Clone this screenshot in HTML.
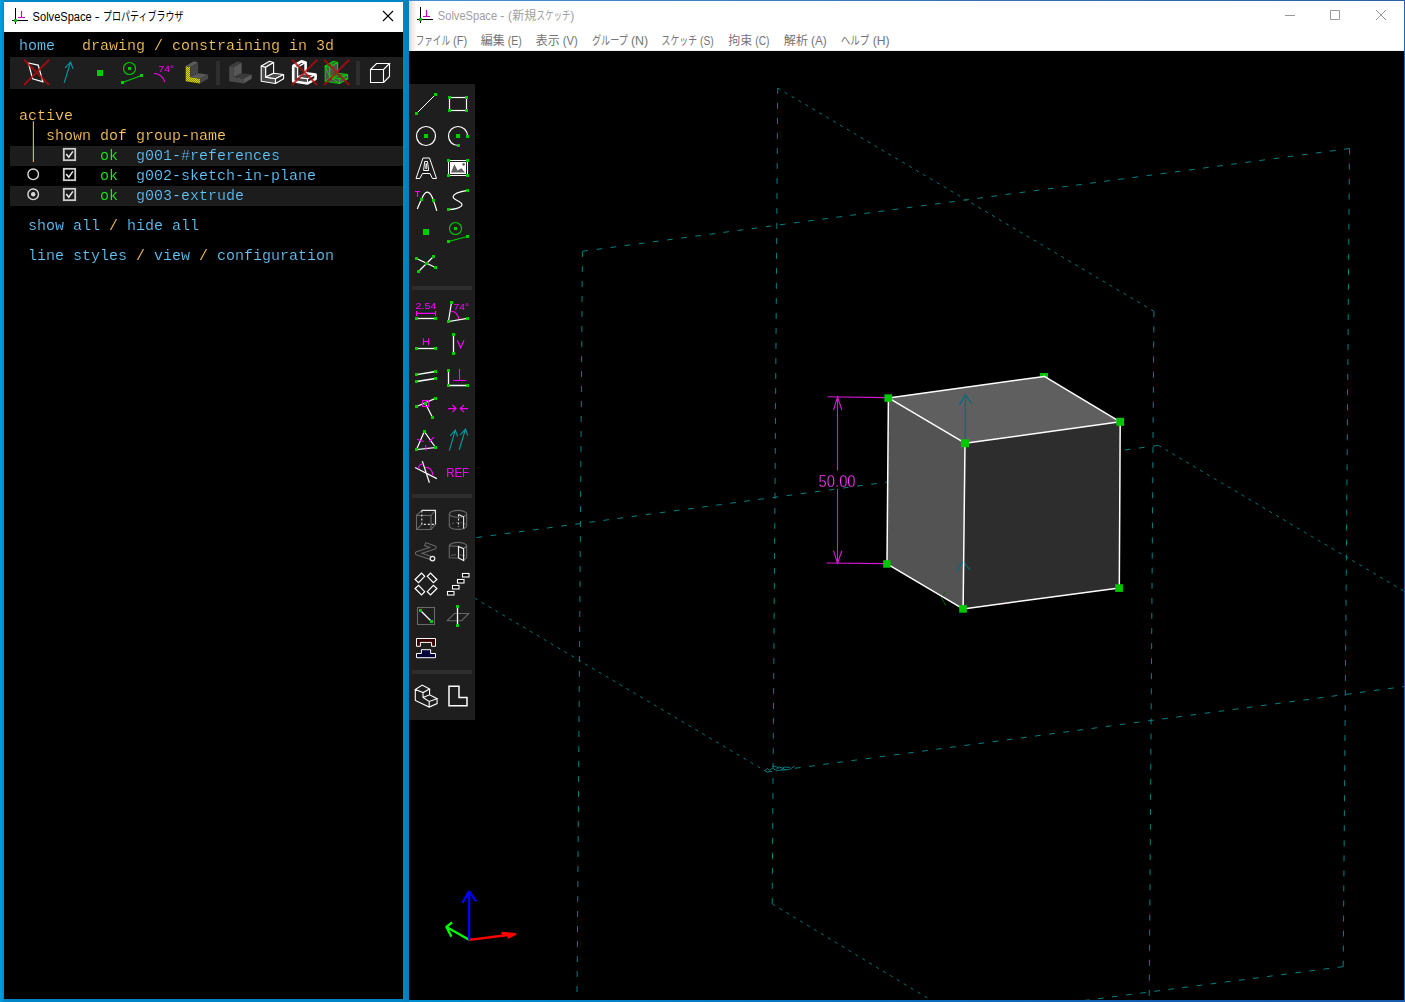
<!DOCTYPE html>
<html lang="ja">
<head>
<meta charset="utf-8">
<title>SolveSpace</title>
<style>
html,body{margin:0;padding:0;}
body{width:1405px;height:1002px;overflow:hidden;position:relative;background:#000;
  font-family:"Liberation Sans","Noto Sans CJK JP",sans-serif;}
.abs{position:absolute;}
/* ---------- left window (property browser) ---------- */
#lw{position:absolute;left:0;top:0;width:409px;height:1002px;
  background:linear-gradient(90deg,#00a0e2 0px,#0092d4 3px,#0086c8 4px,#0086c8 403px,#0484c2 404px,#027ebc 409px);}
#lw .title{position:absolute;left:4px;top:2px;width:399px;height:30px;background:#fff;}
#lw .title span{position:absolute;left:29px;top:7px;font-size:12px;line-height:15px;color:#000;white-space:nowrap;}
#lw .body{position:absolute;left:4px;top:32px;width:399px;height:967px;background:#000;}
.mono{font-family:"Liberation Mono","DejaVu Sans Mono",monospace;font-size:15px;line-height:20px;
  white-space:pre;position:absolute;letter-spacing:0;opacity:0.999;-webkit-text-stroke:0.18px #000;paint-order:fill stroke;}
.o{color:#ffc864;}
.l{color:#64c8ff;}
.g{color:#28f028;}
.rowbg{position:absolute;left:10px;width:393px;height:20px;background:#1c1c1c;}
/* ---------- right window (main) ---------- */
#rw{position:absolute;left:409px;top:0;width:996px;height:1002px;background:#000;}
#rw .title{position:absolute;left:0;top:1px;width:995px;height:30px;background:#fff;}
#rw .title span{position:absolute;left:29px;top:7px;font-size:12px;line-height:15px;color:#999;white-space:nowrap;}
#rw .menu{position:absolute;left:0;top:31px;width:995px;height:20px;background:#fff;border-bottom:1px solid #f0f0f0;box-sizing:border-box;}
#rw .menu span{position:absolute;top:6px;font-size:12px;line-height:15px;color:#6d6d6d;white-space:nowrap;}
#gfx{position:absolute;left:0;top:0;width:1405px;height:1002px;}
#rw .shade{position:absolute;left:0;top:1px;width:8px;height:50px;background:linear-gradient(90deg,#d4d4d4,#ececec 40%,#fff);}
#rw .bt{position:absolute;left:0;top:0;width:996px;height:1px;background:linear-gradient(90deg,#4590d4,#3570b6 60%,#2b5ea6);}
#rw .bb{position:absolute;left:0;top:1000px;width:996px;height:2px;background:linear-gradient(90deg,#0090d0,#0a78c4 35%,#1560b4 75%,#1a5cae);}
#rw .br{position:absolute;left:995px;top:0;width:1px;height:1002px;background:#2a62a4;}
</style>
</head>
<body>

<!-- ================= LEFT WINDOW ================= -->
<div id="lw">
  <div class="title"></div>
  <div class="body"></div>
</div>

<!-- text-window content (absolute page coords) -->
<div class="abs" style="left:10px;top:57px;width:393px;height:32px;background:#1e1e1e;"></div>
<div class="rowbg" style="top:146px;"></div>
<div class="rowbg" style="top:186px;"></div>

<div class="mono" style="left:19px;top:37px;"><span class="l">home</span><span class="o">   drawing / constraining in 3d</span></div>
<div class="mono o" style="left:19px;top:107px;">active</div>
<div class="mono o" style="left:46px;top:127px;">shown dof group-name</div>
<div class="mono" style="left:100px;top:147px;"><span class="g">ok</span>  <span class="l">g001-#references</span></div>
<div class="mono" style="left:100px;top:167px;"><span class="g">ok</span>  <span class="l">g002-sketch-in-plane</span></div>
<div class="mono" style="left:100px;top:187px;"><span class="g">ok</span>  <span class="l">g003-extrude</span></div>
<div class="mono" style="left:28px;top:217px;"><span class="l">show all</span><span class="o"> / </span><span class="l">hide all</span></div>
<div class="mono" style="left:28px;top:247px;"><span class="l">line styles</span><span class="o"> / </span><span class="l">view</span><span class="o"> / </span><span class="l">configuration</span></div>

<!-- ================= RIGHT WINDOW ================= -->
<div id="rw">
  <div class="title"></div>
  <div class="menu"></div>
  <div class="shade"></div>
  <div class="bt"></div><div class="bb"></div><div class="br"></div>
</div>

<!-- ================= GRAPHICS OVERLAY ================= -->
<svg id="gfx" width="1405" height="1002" viewBox="0 0 1405 1002">
<defs><filter id="nf" x="-10%" y="-30%" width="120%" height="160%"><feOffset dx="0" dy="0"/></filter><clipPath id="cv"><rect x="409" y="51" width="995" height="949"/></clipPath></defs>
<g clip-path="url(#cv)">
<line x1="582.4" y1="251.3" x2="1349.5" y2="148.5" stroke="#008186" stroke-width="1" stroke-dasharray="5.69 8.54"/>
<line x1="1349.5" y1="148.5" x2="1343.2" y2="966.6" stroke="#008186" stroke-width="1" stroke-dasharray="6.02 9.02"/>
<line x1="1343.2" y1="966.6" x2="576.5" y2="1067.0" stroke="#008186" stroke-width="1" stroke-dasharray="5.69 8.53"/>
<line x1="576.5" y1="1067.0" x2="582.4" y2="251.3" stroke="#008186" stroke-width="1" stroke-dasharray="6.00 9.00"/>
<line x1="777.7" y1="88.1" x2="1153.9" y2="311.3" stroke="#007479" stroke-width="1" stroke-dasharray="3.22 4.82"/>
<line x1="1153.9" y1="311.3" x2="1148.3" y2="1132.0" stroke="#008186" stroke-width="1" stroke-dasharray="6.03 9.05"/>
<line x1="1148.3" y1="1132.0" x2="772.2" y2="903.9" stroke="#007479" stroke-width="1" stroke-dasharray="3.23 4.85"/>
<line x1="772.2" y1="903.9" x2="777.7" y2="88.1" stroke="#008186" stroke-width="1" stroke-dasharray="6.00 9.00"/>
<line x1="392.0" y1="549.0" x2="1158.5" y2="445.4" stroke="#008186" stroke-width="1" stroke-dasharray="5.69 8.53"/>
<line x1="1158.5" y1="445.4" x2="1535.0" y2="669.0" stroke="#007479" stroke-width="1" stroke-dasharray="3.22 4.83"/>
<line x1="1535.0" y1="669.0" x2="767.0" y2="772.0" stroke="#008186" stroke-width="1" stroke-dasharray="5.70 8.55"/>
<line x1="767.0" y1="772.0" x2="392.0" y2="549.0" stroke="#007479" stroke-width="1" stroke-dasharray="3.21 4.81"/>
<path d="M764.5,770.5 l3,-2 l2,2 l3,-2.5 l3,2 l3,-3 l4,1 l3,2 l5,-1 l4,-3 M776,771 l5,-1 l3,-3 l6,0.5 M772,766 l4,0.5 l3,2" stroke="#008186" stroke-width="0.9" fill="none"/>
<rect x="1040.1" y="373" width="8.0" height="7.0" fill="#00c800"/>
<polygon points="888.4,397.9 1044.4,376.4 1120.2,421.8 965.0,443.2" fill="#5f5f5f" stroke="none" stroke-width="1" />
<polygon points="888.4,397.9 965.0,443.2 963.1,608.9 887.0,563.8" fill="#535353" stroke="none" stroke-width="1" />
<polygon points="965.0,443.2 1120.2,421.8 1119.3,588.1 963.1,608.9" fill="#2d2d2d" stroke="none" stroke-width="1" />
<path d="M965.2,443 L965.4,394.7 M959.2,405.4 L965.4,394.7 L971.6,403.6" stroke="#007078" stroke-width="1.2" fill="none"/>
<path d="M956.5,571.8 L962.9,561.1 L969.9,570" stroke="#006c80" stroke-width="1.2" fill="none"/>
<path d="M945.8,591.7 L941.4,597.6 L945.8,605.6" stroke="#006400" stroke-width="1" fill="none"/>
<path d="M1001.5,605 L1005,603.5" stroke="#700000" stroke-width="1" fill="none"/>
<line x1="888.4" y1="397.9" x2="1044.4" y2="376.4" stroke="#ffffff" stroke-width="1.5" stroke-linecap="round"/>
<line x1="1044.4" y1="376.4" x2="1120.2" y2="421.8" stroke="#ffffff" stroke-width="1.5" stroke-linecap="round"/>
<line x1="1120.2" y1="421.8" x2="965.0" y2="443.2" stroke="#ffffff" stroke-width="1.5" stroke-linecap="round"/>
<line x1="965.0" y1="443.2" x2="888.4" y2="397.9" stroke="#ffffff" stroke-width="1.5" stroke-linecap="round"/>
<line x1="888.4" y1="397.9" x2="887.0" y2="563.8" stroke="#ffffff" stroke-width="1.5" stroke-linecap="round"/>
<line x1="965.0" y1="443.2" x2="963.1" y2="608.9" stroke="#ffffff" stroke-width="1.5" stroke-linecap="round"/>
<line x1="1120.2" y1="421.8" x2="1119.3" y2="588.1" stroke="#ffffff" stroke-width="1.5" stroke-linecap="round"/>
<line x1="887.0" y1="563.8" x2="963.1" y2="608.9" stroke="#ffffff" stroke-width="1.5" stroke-linecap="round"/>
<line x1="963.1" y1="608.9" x2="1119.3" y2="588.1" stroke="#ffffff" stroke-width="1.5" stroke-linecap="round"/>
<path d="M827.5,396.8 L886,397.6 M826.5,563 L885,563.6 M837.5,397 L837.5,470.5 M837.5,489 L837.5,563.2 M833.5,410 L837.5,397 L841.9,410 M833.5,550.7 L837.5,563.2 L841.9,550.7" stroke="#d418d4" stroke-width="1.1" fill="none"/>
<text filter="url(#nf)" x="818.6" y="486.8" font-family="'Liberation Sans',sans-serif" font-size="16.4" fill="#ff3cff" textLength="37" lengthAdjust="spacingAndGlyphs" stroke="#000" stroke-width="0.3">50.00</text>
<rect x="884.4" y="394.3" width="7.7" height="7.5" fill="#00c800"/>
<rect x="1116.3" y="417.8" width="7.8" height="8.0" fill="#00c800"/>
<rect x="961" y="439.2" width="8.0" height="8.0" fill="#00c800"/>
<rect x="883.2" y="560.2" width="7.4" height="7.5" fill="#00c800"/>
<rect x="959.2" y="605.1" width="7.6" height="7.6" fill="#00c800"/>
<rect x="1115.2" y="584.3" width="7.7" height="7.6" fill="#00c800"/>
<g fill="none" stroke-width="2.3" stroke-linecap="butt" stroke-linejoin="round">
<path d="M469.1,939.8 L446.4,927 M452.1,922.3 L446.4,927 L451.4,936.6" stroke="#00ff00"/>
<path d="M469.1,939.8 L515.1,934.1 M501.5,933 L515.1,934.1 L507.6,937.7" stroke="#ff0000"/>
<path d="M469.1,939.8 L469.1,891.4 M462.4,902.8 L469.1,891.4 L476.1,901.4" stroke="#0000ff"/>
</g>
</g>
<rect x="409" y="84" width="66" height="636" fill="#1e1e1e"/>
<rect x="412" y="286" width="60" height="4" fill="#2e2e2e"/>
<rect x="412" y="494" width="60" height="4" fill="#2e2e2e"/>
<rect x="412" y="670" width="60" height="4" fill="#2e2e2e"/>
<g shape-rendering="auto">
<line x1="416.5" y1="113.5" x2="435.5" y2="94.5" stroke="#fff" stroke-width="1" />
<rect x="415" y="112" width="3" height="3" fill="#00cc00"/>
<rect x="434" y="93" width="3" height="3" fill="#00cc00"/>
<rect x="449.5" y="97.5" width="17" height="13" fill="none" stroke="#fff" stroke-width="1.2"/>
<rect x="448" y="96" width="3" height="3" fill="#00cc00"/>
<rect x="465" y="96" width="3" height="3" fill="#00cc00"/>
<rect x="448" y="109" width="3" height="3" fill="#00cc00"/>
<rect x="465" y="109" width="3" height="3" fill="#00cc00"/>
<circle cx="426" cy="136" r="9.5" fill="none" stroke="#fff" stroke-width="1.2"/>
<rect x="424" y="134" width="4" height="4" fill="#00cc00"/>
<path d="M467.5,136 A9.5,9.5 0 1 0 458,145.5" stroke="#fff" stroke-width="1.2" fill="none" />
<rect x="456" y="134" width="4" height="4" fill="#00cc00"/>
<rect x="466" y="135" width="3" height="3" fill="#00cc00"/>
<rect x="457" y="144" width="3" height="3" fill="#00cc00"/>
<path d="M416,178.5 L423,158 L429.5,158 L436.5,178.5 L432.5,178.5 L430,173.5 L422.5,173.5 L419.8,178.5 Z M423.6,170.5 L424.7,161.5 L427.5,161.5 L428.6,170.5 Z" stroke="#fff" stroke-width="1" fill="none" />
<path d="M426,163.5 L425.6,168.5 L426.8,168.5 L426.4,163.5 Z" stroke="#fff" stroke-width="0.8" fill="none" />
<rect x="448.5" y="160.5" width="19" height="15" fill="none" stroke="#fff" stroke-width="1"/>
<rect x="450" y="162" width="16" height="12" fill="#fff"/>
<polygon points="451.0,172.6 454.4,164.2 457.6,170.5 461.4,168.2 465.0,172.6" fill="#606060" stroke="none" stroke-width="1" />
<circle cx="463.6" cy="164.4" r="1.3" fill="#606060"/>
<rect x="447" y="159" width="3" height="3" fill="#00cc00"/>
<rect x="466" y="159" width="3" height="3" fill="#00cc00"/>
<rect x="447" y="174" width="3" height="3" fill="#00cc00"/>
<rect x="466" y="174" width="3" height="3" fill="#00cc00"/>
<path d="M417.3,208.9 C419,205 420,202 421.5,199.6 C424,193 426,192 427.5,192.2 C430,192.5 432,196 433.3,200.6 C434.8,204 436,208 436.8,210.8" stroke="#fff" stroke-width="1.2" fill="none" />
<rect x="420" y="198" width="3" height="3" fill="#00cc00"/>
<rect x="432" y="199" width="3" height="3" fill="#00cc00"/>
<path d="M415,191.5 L420,191.5 M417.5,191.5 L417.5,197" stroke="#ff00ff" stroke-width="1.2" fill="none" />
<path d="M467.5,190.3 C460,191.5 453.5,194 453.1,196.7 C453,200 462.5,201.5 462,204.7 C461.5,208 454,209.5 448.3,209.5" stroke="#fff" stroke-width="1.2" fill="none" />
<rect x="466" y="189" width="3" height="3" fill="#00cc00"/>
<rect x="447" y="208" width="3" height="3" fill="#00cc00"/>
<rect x="423" y="229" width="6" height="6" fill="#00cc00"/>
<circle cx="455.5" cy="228.5" r="6" fill="none" stroke="#00cc00" stroke-width="1.1"/>
<rect x="454" y="227" width="3" height="3" fill="#00cc00"/>
<line x1="448.5" y1="241.5" x2="467.5" y2="236.5" stroke="#00cc00" stroke-width="1.1" />
<rect x="447" y="240" width="3" height="3" fill="#00cc00"/>
<rect x="466" y="235" width="3" height="3" fill="#00cc00"/>
<line x1="416.5" y1="258.5" x2="435.5" y2="267.5" stroke="#fff" stroke-width="1.2" />
<line x1="433.5" y1="256.5" x2="418.5" y2="271.5" stroke="#fff" stroke-width="1.2" />
<rect x="415" y="257" width="3" height="3" fill="#00cc00"/>
<rect x="432" y="255" width="3" height="3" fill="#00cc00"/>
<rect x="434" y="266" width="3" height="3" fill="#00cc00"/>
<rect x="417" y="270" width="3" height="3" fill="#00cc00"/>
<rect x="425" y="262" width="3" height="3" fill="#00cc00"/>
<text filter="url(#nf)" x="415.6" y="308.9" font-family="'Liberation Sans',sans-serif" font-size="9.6" fill="#ff00ff" textLength="20.8" lengthAdjust="spacingAndGlyphs">2.54</text>
<path d="M416.5,313.4 L435.5,313.4 M416.5,311 L416.5,316 M435.5,311 L435.5,316" stroke="#ff00ff" stroke-width="1.1" fill="none" />
<line x1="416.5" y1="318.5" x2="435.5" y2="318.5" stroke="#fff" stroke-width="1.3" />
<rect x="415" y="317" width="3" height="3" fill="#00cc00"/>
<rect x="434" y="317" width="3" height="3" fill="#00cc00"/>
<path d="M451.5,302.4 L448.4,321.5 L467.5,318.4" stroke="#fff" stroke-width="1.2" fill="none" />
<path d="M451,311.3 C455,311.3 458.3,314.5 458.6,319" stroke="#ff00ff" stroke-width="1.1" fill="none" />
<text filter="url(#nf)" x="453.6" y="309.8" font-family="'Liberation Sans',sans-serif" font-size="9.6" fill="#ff00ff" textLength="15.6" lengthAdjust="spacingAndGlyphs">74°</text>
<rect x="450" y="301" width="3" height="3" fill="#00cc00"/>
<rect x="447" y="320" width="3" height="3" fill="#00cc00"/>
<rect x="466" y="317" width="3" height="3" fill="#00cc00"/>
<path d="M423.4,338.2 L423.4,345 M428.6,338.2 L428.6,345 M423.4,341.5 L428.6,341.5" stroke="#ff00ff" stroke-width="1.1" fill="none" />
<line x1="416.5" y1="348.5" x2="435.5" y2="348.5" stroke="#fff" stroke-width="1.3" />
<rect x="415" y="347" width="3" height="3" fill="#00cc00"/>
<rect x="434" y="347" width="3" height="3" fill="#00cc00"/>
<line x1="453.5" y1="334.5" x2="453.5" y2="353.5" stroke="#fff" stroke-width="1.3" />
<rect x="452" y="333" width="3" height="3" fill="#00cc00"/>
<rect x="452" y="352" width="3" height="3" fill="#00cc00"/>
<path d="M457.2,340.2 L460.6,347.8 L464,340.2" stroke="#ff00ff" stroke-width="1.1" fill="none" />
<line x1="416.5" y1="374.6" x2="435.5" y2="371.5" stroke="#fff" stroke-width="1.3" />
<line x1="416.5" y1="381.5" x2="435.5" y2="378.5" stroke="#fff" stroke-width="1.3" />
<rect x="415" y="373" width="3" height="3" fill="#00cc00"/>
<rect x="434" y="370" width="3" height="3" fill="#00cc00"/>
<rect x="415" y="380" width="3" height="3" fill="#00cc00"/>
<rect x="434" y="377" width="3" height="3" fill="#00cc00"/>
<path d="M448.5,370.5 L448.5,385.5 L467.5,385.5" stroke="#fff" stroke-width="1.3" fill="none" />
<path d="M459.5,369 L459.5,380.5 M453.2,380.5 L466,380.5" stroke="#ff00ff" stroke-width="1.1" fill="none" />
<rect x="447" y="369" width="3" height="3" fill="#00cc00"/>
<rect x="447" y="384" width="3" height="3" fill="#00cc00"/>
<rect x="466" y="384" width="3" height="3" fill="#00cc00"/>
<path d="M416.5,406.5 L435.5,398.4 M425.5,403.6 L432.5,417.5" stroke="#fff" stroke-width="1.2" fill="none" />
<rect x="415" y="405" width="3" height="3" fill="#00cc00"/>
<rect x="434" y="397" width="3" height="3" fill="#00cc00"/>
<rect x="431" y="416" width="3" height="3" fill="#00cc00"/>
<rect x="424" y="402" width="3" height="3" fill="#00cc00"/>
<rect x="422.5" y="400.5" width="6" height="6" fill="none" stroke="#ff00ff" stroke-width="1.1"/>
<path d="M448,408.6 L456,408.6 M452.5,405 L456,408.6 L452.5,412.2 M468,408.6 L460.2,408.6 M464,405 L460.2,408.6 L464,412.2" stroke="#ff00ff" stroke-width="1.1" fill="none" />
<path d="M424.3,431.5 L416.5,449.6 L435.5,447.5 Z" stroke="#fff" stroke-width="1.2" fill="none" />
<path d="M417,439.2 L423.7,441.6 M429.3,441.6 L433.9,437.1 M425.5,445.1 L426.3,450.7" stroke="#ff00ff" stroke-width="1.1" fill="none" />
<rect x="423" y="430" width="3" height="3" fill="#00cc00"/>
<rect x="415" y="448" width="3" height="3" fill="#00cc00"/>
<rect x="434" y="446" width="3" height="3" fill="#00cc00"/>
<path d="M449.3,450.7 L455.3,430.1 M450.2,435.8 L455.3,430.1 L457.7,436.5 M459.2,449.7 L465.5,429.1 M460.2,434.8 L465.5,429.1 L467.9,435.6" stroke="#00949c" stroke-width="1.2" fill="none" />
<path d="M415.1,467.5 L436.8,478.6 M422.3,461.1 L429.4,482.8" stroke="#fff" stroke-width="1.2" fill="none" />
<path d="M422.9,464.2 C420.5,463.8 418.4,465.8 418.7,468.8 M425.2,467.6 C429,466.6 432.6,470 432.7,475.2" stroke="#ff00ff" stroke-width="1.1" fill="none" />
<text filter="url(#nf)" x="446.3" y="477.1" font-family="'Liberation Sans',sans-serif" font-size="12.4" fill="#ff00ff" textLength="22.8" lengthAdjust="spacingAndGlyphs">REF</text>
<rect x="416.5" y="515.5" width="14.5" height="14" fill="none" stroke="#686868" stroke-width="1.1"/>
<path d="M416.5,515.5 L421.8,510.4 M431,515.5 L435.5,510.4 M431,529.5 L435.5,524.4 M416.5,529.5 L421.8,524.4" stroke="#686868" stroke-width="1.1" fill="none" />
<path d="M421.8,510.4 L435.5,510.4 L435.5,524.4" stroke="#e8e8e8" stroke-width="1.1" fill="none" />
<path d="M421.8,510.4 L421.8,524.4 L435.5,524.4" stroke="#e8e8e8" stroke-width="1.1" fill="none" stroke-dasharray="2 2"/>
<ellipse cx="458" cy="513.8" rx="8.7" ry="3.4" fill="none" stroke="#686868" stroke-width="1.1"/>
<path d="M449.3,513.8 L449.3,526 A8.7,3.4 0 0 0 466.7,526 L466.7,513.8" stroke="#686868" stroke-width="1.1" fill="none" />
<path d="M449.3,526 A8.7,3.4 0 0 1 466.7,526" stroke="#686868" stroke-width="0.9" fill="none" stroke-dasharray="2 2"/>
<path d="M458.5,514.5 L463.6,516.8 L463.6,528.6" stroke="#e8e8e8" stroke-width="1.1" fill="none" />
<path d="M458.5,514.5 L458.5,527" stroke="#e8e8e8" stroke-width="1.1" fill="none" stroke-dasharray="2 2"/>
<path d="M424.7,543.9 L434.6,547.5 L417,553.3 L430.7,558" fill="none" stroke="#686868" stroke-width="4.3" stroke-linejoin="round" stroke-linecap="butt"/>
<path d="M425.7,544.3 L434.6,547.5 L417,553.3 L431.5,558.3" fill="none" stroke="#1e1e1e" stroke-width="2.1" stroke-linejoin="round" stroke-linecap="butt"/>
<circle cx="432.5" cy="558.6" r="2.3" fill="#1e1e1e" stroke="#f0f0f0" stroke-width="1.2"/>
<path d="M449.3,545.8 A8.7,3.4 0 0 1 466.7,545.8 L466.7,557.6 L463.6,560.4 M449.3,545.8 L449.3,557.8 L458.5,558 M449.3,545.8 L458.5,546.5 M466.7,545.8 L463.6,548.7" stroke="#686868" stroke-width="1.1" fill="none" />
<path d="M451,555.4 L456,554.6 M460,554.8 L465,555.6" stroke="#686868" stroke-width="0.9" fill="none" />
<path d="M458.5,546.5 L463.6,548.7 L463.6,560.5 L458.5,558 Z" stroke="#f0f0f0" stroke-width="1.2" fill="none" />
<polygon points="415.1,579.5 421.5,573.1 424.7,576.3 418.6,582.7" fill="none" stroke="#fff" stroke-width="1.2" />
<polygon points="436.9,579.5 430.5,573.1 427.3,576.3 433.4,582.7" fill="none" stroke="#fff" stroke-width="1.2" />
<polygon points="415.1,588.5 421.5,594.9 424.7,591.7 418.6,585.3" fill="none" stroke="#fff" stroke-width="1.2" />
<polygon points="436.9,588.5 430.5,594.9 427.3,591.7 433.4,585.3" fill="none" stroke="#fff" stroke-width="1.2" />
<rect x="447.5" y="591.5" width="6.5" height="3.5" fill="#050505" stroke="#fff" stroke-width="1.1"/>
<rect x="452.5" y="585.5" width="6.5" height="3.5" fill="#050505" stroke="#fff" stroke-width="1.1"/>
<rect x="457.5" y="579.5" width="6.5" height="3.5" fill="#050505" stroke="#fff" stroke-width="1.1"/>
<rect x="462.5" y="573.5" width="6.5" height="3.5" fill="#050505" stroke="#fff" stroke-width="1.1"/>
<rect x="417.5" y="607.5" width="17" height="17" fill="none" stroke="#686868" stroke-width="1.1"/>
<line x1="420.5" y1="610.5" x2="431.5" y2="621.5" stroke="#fff" stroke-width="1.2" />
<rect x="419" y="609" width="3" height="3" fill="#00cc00"/>
<rect x="430" y="620" width="3" height="3" fill="#00cc00"/>
<polygon points="447.3,620.7 454.4,613.5 468.7,613.5 461.7,620.7" fill="none" stroke="#686868" stroke-width="1.1" />
<line x1="457.5" y1="606.5" x2="457.5" y2="625.5" stroke="#fff" stroke-width="1.3" />
<rect x="456" y="605" width="3" height="3" fill="#00cc00"/>
<rect x="456" y="624" width="3" height="3" fill="#00cc00"/>
<path d="M416.5,638.5 L435.5,638.5 L435.5,646.3 L431.6,646.3 L431.6,642.4 L420.4,642.4 L420.4,646.3 L416.5,646.3 Z" stroke="#fff" stroke-width="1" fill="#3a0000" />
<path d="M421.4,649.7 L430.6,649.7 L430.6,653.5 L435.5,653.5 L435.5,657.7 L416.5,657.7 L416.5,653.5 L421.4,653.5 Z" stroke="#fff" stroke-width="1" fill="#00003a" />
<path d="M415.3,689.5 L422.2,685.1 L429.6,689.1 L423,692.6 Z M423,692.6 L423,697.4 L429.2,701.4 L437.1,698.7 L429.6,694.8 L423,697.4 M429.6,689.1 L429.6,694.8 M437.1,698.7 L437.1,703.6 L429.2,707.1 L415.3,700.5 L415.3,689.5 M429.2,701.4 L429.2,707.1" stroke="#fff" stroke-width="1.1" fill="none" />
<path d="M449,686.3 L459,686.3 L459,697.4 L467,697.4 L467,705.7 L449,705.7 Z" stroke="#fff" stroke-width="1.5" fill="none" />
</g>
<g transform="translate(0,0)">
<path d="M15.5,8 L15.5,24 M12.0,20.5 L28.0,20.5" stroke="#000" stroke-width="1" fill="none"/>
<path d="M21.5,11 L21.5,17.5 M18.0,17.5 L25.0,17.5" stroke="#d000d0" stroke-width="1.2" fill="none"/>
<circle cx="15.5" cy="20.5" r="1.8" fill="#00c000"/>
</g>
<g transform="translate(0,-1)">
<path d="M420.5,8 L420.5,24 M417.0,20.5 L433.0,20.5" stroke="#000" stroke-width="1" fill="none"/>
<path d="M426.5,11 L426.5,17.5 M423.0,17.5 L430.0,17.5" stroke="#d000d0" stroke-width="1.2" fill="none"/>
<circle cx="420.5" cy="20.5" r="1.8" fill="#00c000"/>
</g>
<path d="M383,11 L393,21 M393,11 L383,21" stroke="#000" stroke-width="1.1" fill="none"/>
<path d="M1285,15.5 L1295,15.5 M1330.5,10.5 h9 v9 h-9 Z M1376,10 L1386,20 M1386,10 L1376,20" stroke="#999" stroke-width="1" fill="none"/>
<polygon points="28.4,63.0 38.2,65.1 42.9,81.8 32.6,78.8" fill="none" stroke="#fff" stroke-width="1.2" />
<path d="M24.0,59.8 L49.2,85 M49.2,59.8 L24.0,85" stroke="#b40a0a" stroke-width="2" fill="none" opacity="0.8"/>
<path d="M64.2,82.9 L70.6,62.1 M65.1,67.8 L70.6,62.1 L73,68.9" stroke="#0096a2" stroke-width="1.2" fill="none" />
<rect x="97" y="70" width="6" height="6" fill="#00cc00"/>
<circle cx="129.5" cy="68.5" r="6" fill="none" stroke="#00cc00" stroke-width="1.1"/>
<rect x="128" y="67" width="3" height="3" fill="#00cc00"/>
<line x1="122.5" y1="82.5" x2="141.5" y2="75.5" stroke="#00cc00" stroke-width="1.1" />
<rect x="121" y="81" width="3" height="3" fill="#00cc00"/>
<rect x="140" y="74" width="3" height="3" fill="#00cc00"/>
<text filter="url(#nf)" x="158.6" y="72" font-family="'Liberation Sans',sans-serif" font-size="9.8" fill="#ff00ff" textLength="15.6" lengthAdjust="spacingAndGlyphs">74°</text>
<path d="M154,73.5 C159,73.5 163.5,77 164.8,82" stroke="#ff00ff" stroke-width="1.1" fill="none" />
<defs><pattern id="yc" width="2" height="2" patternUnits="userSpaceOnUse"><rect width="2" height="2" fill="#8a8a00"/><rect width="1" height="1" fill="#d8d800"/><rect x="1" y="1" width="1" height="1" fill="#d8d800"/></pattern></defs>
<polygon points="185.7,66.0 190.2,67.2 190.2,77.1 200.0,78.8 200.0,83.5 185.7,81.3" fill="url(#yc)" stroke="none" stroke-width="1" stroke-linejoin="round"/>
<polygon points="185.7,66.0 194.0,61.3 198.1,62.5 190.2,67.2" fill="#5c5c5c" stroke="none" stroke-width="1" stroke-linejoin="round"/>
<polygon points="190.2,67.2 198.1,62.5 198.1,73.2 190.2,77.1" fill="#444" stroke="none" stroke-width="1" stroke-linejoin="round"/>
<polygon points="190.2,77.1 198.1,73.2 208.1,74.5 200.0,78.8" fill="#585858" stroke="none" stroke-width="1" stroke-linejoin="round"/>
<polygon points="200.0,78.8 208.1,74.5 208.1,78.8 200.0,83.5" fill="#484848" stroke="none" stroke-width="1" stroke-linejoin="round"/>
<rect x="216" y="61" width="4" height="24" fill="#2e2e2e"/>
<rect x="356" y="61" width="4" height="24" fill="#2e2e2e"/>
<polygon points="229.2,66.0 233.7,67.2 233.7,77.1 243.5,78.8 243.5,83.5 229.2,81.3" fill="#4a4a4a" stroke="none" stroke-width="1" stroke-linejoin="round"/>
<polygon points="229.2,66.0 237.5,61.3 241.6,62.5 233.7,67.2" fill="#3c3c3c" stroke="none" stroke-width="1" stroke-linejoin="round"/>
<polygon points="233.7,67.2 241.6,62.5 241.6,73.2 233.7,77.1" fill="#575757" stroke="none" stroke-width="1" stroke-linejoin="round"/>
<polygon points="233.7,77.1 241.6,73.2 251.6,74.5 243.5,78.8" fill="#3a3a3a" stroke="none" stroke-width="1" stroke-linejoin="round"/>
<polygon points="243.5,78.8 251.6,74.5 251.6,78.8 243.5,83.5" fill="#5a5a5a" stroke="none" stroke-width="1" stroke-linejoin="round"/>
<polygon points="261.2,66.0 265.7,67.2 265.7,77.1 275.5,78.8 275.5,83.5 261.2,81.3" fill="#4a4a4a" stroke="#fff" stroke-width="1.1" stroke-linejoin="round"/>
<polygon points="261.2,66.0 269.5,61.3 273.6,62.5 265.7,67.2" fill="#3a3a3a" stroke="#fff" stroke-width="1.1" stroke-linejoin="round"/>
<polygon points="265.7,67.2 273.6,62.5 273.6,73.2 265.7,77.1" fill="#242424" stroke="#fff" stroke-width="1.1" stroke-linejoin="round"/>
<polygon points="265.7,77.1 273.6,73.2 283.6,74.5 275.5,78.8" fill="#4a4a4a" stroke="#fff" stroke-width="1.1" stroke-linejoin="round"/>
<polygon points="275.5,78.8 283.6,74.5 283.6,78.8 275.5,83.5" fill="#242424" stroke="#fff" stroke-width="1.1" stroke-linejoin="round"/>
<polygon points="293.2,66.0 297.7,67.2 297.7,77.1 307.5,78.8 307.5,83.5 293.2,81.3" fill="#4a4a4a" stroke="#fff" stroke-width="1.1" stroke-linejoin="round"/>
<polygon points="293.2,66.0 301.5,61.3 305.6,62.5 297.7,67.2" fill="#3a3a3a" stroke="#fff" stroke-width="1.1" stroke-linejoin="round"/>
<polygon points="297.7,67.2 305.6,62.5 305.6,73.2 297.7,77.1" fill="#242424" stroke="#fff" stroke-width="1.1" stroke-linejoin="round"/>
<polygon points="297.7,77.1 305.6,73.2 315.6,74.5 307.5,78.8" fill="#4a4a4a" stroke="#fff" stroke-width="1.1" stroke-linejoin="round"/>
<polygon points="307.5,78.8 315.6,74.5 315.6,78.8 307.5,83.5" fill="#242424" stroke="#fff" stroke-width="1.1" stroke-linejoin="round"/>
<polygon points="293.2,66.0 301.5,61.3 305.6,62.5 305.6,73.2 315.6,74.5 315.6,78.8 307.5,83.5 293.2,81.3" fill="none" stroke="#fff" stroke-width="2.6" stroke-linejoin="round"/>
<path d="M292.0,59.8 L317.2,85 M317.2,59.8 L292.0,85" stroke="#b40a0a" stroke-width="2" fill="none" opacity="0.8"/>
<polygon points="325.2,66.0 329.7,67.2 329.7,77.1 339.5,78.8 339.5,83.5 325.2,81.3" fill="#505050" stroke="#00d000" stroke-width="1.1" stroke-linejoin="round"/>
<polygon points="325.2,66.0 333.5,61.3 337.6,62.5 329.7,67.2" fill="#484848" stroke="#00d000" stroke-width="1.1" stroke-linejoin="round"/>
<polygon points="329.7,67.2 337.6,62.5 337.6,73.2 329.7,77.1" fill="#505050" stroke="#00d000" stroke-width="1.1" stroke-linejoin="round"/>
<polygon points="329.7,77.1 337.6,73.2 347.6,74.5 339.5,78.8" fill="#484848" stroke="#00d000" stroke-width="1.1" stroke-linejoin="round"/>
<polygon points="339.5,78.8 347.6,74.5 347.6,78.8 339.5,83.5" fill="#505050" stroke="#00d000" stroke-width="1.1" stroke-linejoin="round"/>
<path d="M325.2,66 L329.7,77.1 L325.2,81.3 M329.7,77.1 L339.5,83.5 M329.7,67.2 L337.6,73.2 M333.5,61.3 L329.7,67.2 M329.7,77.1 L347.6,74.5 M339.5,78.8 L347.6,78.8" stroke="#00d000" stroke-width="1" fill="none" />
<path d="M324.0,59.8 L349.2,85 M349.2,59.8 L324.0,85" stroke="#b40a0a" stroke-width="2" fill="none" opacity="0.8"/>
<path d="M370.5,69.5 h13 v13 h-13 Z M370.5,69.5 L376.5,63.5 L389.5,63.5 L383.5,69.5 M389.5,63.5 L389.5,76.5 L383.5,82.5" stroke="#fff" stroke-width="1.1" fill="none" />
<line x1="33.4" y1="121.3" x2="33.4" y2="162" stroke="#f0b458" stroke-width="1.1"/>
<circle cx="33.2" cy="174.3" r="5.3" fill="none" stroke="#d8d8d8" stroke-width="1.4"/>
<circle cx="33.2" cy="194.3" r="5.3" fill="none" stroke="#d8d8d8" stroke-width="1.4"/>
<circle cx="33.2" cy="194.3" r="2.2" fill="#d8d8d8"/>
<rect x="63.8" y="148.8" width="11.4" height="11.4" fill="none" stroke="#cdcdcd" stroke-width="1.8"/>
<path d="M66.2,154.0 L68.8,157.2 L72.9,151.4" stroke="#e6e6e6" stroke-width="1.6" fill="none"/>
<rect x="63.8" y="168.8" width="11.4" height="11.4" fill="none" stroke="#cdcdcd" stroke-width="1.8"/>
<path d="M66.2,174.0 L68.8,177.2 L72.9,171.4" stroke="#e6e6e6" stroke-width="1.6" fill="none"/>
<rect x="63.8" y="188.8" width="11.4" height="11.4" fill="none" stroke="#cdcdcd" stroke-width="1.8"/>
<path d="M66.2,194.0 L68.8,197.2 L72.9,191.4" stroke="#e6e6e6" stroke-width="1.6" fill="none"/>
<text x="32.6" y="21.1" font-family="'Liberation Sans','Noto Sans CJK JP',sans-serif" font-size="12" fill="#000" textLength="59.1" lengthAdjust="spacingAndGlyphs">SolveSpace</text>
<text x="94.8" y="21.1" font-family="'Liberation Sans','Noto Sans CJK JP',sans-serif" font-size="12" fill="#000" textLength="4.8" lengthAdjust="spacingAndGlyphs">-</text>
<text x="103.1" y="21.1" font-family="'Liberation Sans','Noto Sans CJK JP',sans-serif" font-size="12" fill="#000" textLength="80.4" lengthAdjust="spacingAndGlyphs">プロパティブラウザ</text>
<text x="437.8" y="19.8" font-family="'Liberation Sans','Noto Sans CJK JP',sans-serif" font-size="12" fill="#a0a0a0" textLength="59.3" lengthAdjust="spacingAndGlyphs">SolveSpace</text>
<text x="500.0" y="19.8" font-family="'Liberation Sans','Noto Sans CJK JP',sans-serif" font-size="12" fill="#a0a0a0" textLength="4.4" lengthAdjust="spacingAndGlyphs">-</text>
<text x="507.9" y="19.8" font-family="'Liberation Sans','Noto Sans CJK JP',sans-serif" font-size="12" fill="#a0a0a0" textLength="4.0" lengthAdjust="spacingAndGlyphs">(</text>
<text x="512.2" y="19.8" font-family="'Liberation Sans','Noto Sans CJK JP',sans-serif" font-size="12" fill="#a0a0a0" textLength="24.1" lengthAdjust="spacingAndGlyphs">新規</text>
<text x="536.4" y="19.8" font-family="'Liberation Sans','Noto Sans CJK JP',sans-serif" font-size="12" fill="#a0a0a0" textLength="34.3" lengthAdjust="spacingAndGlyphs">スケッチ</text>
<text x="570.2" y="19.8" font-family="'Liberation Sans','Noto Sans CJK JP',sans-serif" font-size="12" fill="#a0a0a0" textLength="4.0" lengthAdjust="spacingAndGlyphs">)</text>
<text x="415.7" y="45.0" font-family="'Liberation Sans','Noto Sans CJK JP',sans-serif" font-size="12" fill="#747474" textLength="34.3" lengthAdjust="spacingAndGlyphs">ファイル</text>
<text x="453.0" y="45.0" font-family="'Liberation Sans','Noto Sans CJK JP',sans-serif" font-size="12" fill="#747474" textLength="14.2" lengthAdjust="spacingAndGlyphs">(F)</text>
<text x="480.7" y="45.0" font-family="'Liberation Sans','Noto Sans CJK JP',sans-serif" font-size="12" fill="#747474" textLength="24.1" lengthAdjust="spacingAndGlyphs">編集</text>
<text x="507.8" y="45.0" font-family="'Liberation Sans','Noto Sans CJK JP',sans-serif" font-size="12" fill="#747474" textLength="14.0" lengthAdjust="spacingAndGlyphs">(E)</text>
<text x="535.8" y="45.0" font-family="'Liberation Sans','Noto Sans CJK JP',sans-serif" font-size="12" fill="#747474" textLength="23.8" lengthAdjust="spacingAndGlyphs">表示</text>
<text x="562.8" y="45.0" font-family="'Liberation Sans','Noto Sans CJK JP',sans-serif" font-size="12" fill="#747474" textLength="15.1" lengthAdjust="spacingAndGlyphs">(V)</text>
<text x="591.9" y="45.0" font-family="'Liberation Sans','Noto Sans CJK JP',sans-serif" font-size="12" fill="#747474" textLength="36.0" lengthAdjust="spacingAndGlyphs">グループ</text>
<text x="630.9" y="45.0" font-family="'Liberation Sans','Noto Sans CJK JP',sans-serif" font-size="12" fill="#747474" textLength="17.2" lengthAdjust="spacingAndGlyphs">(N)</text>
<text x="661.6" y="45.0" font-family="'Liberation Sans','Noto Sans CJK JP',sans-serif" font-size="12" fill="#747474" textLength="35.5" lengthAdjust="spacingAndGlyphs">スケッチ</text>
<text x="700.1" y="45.0" font-family="'Liberation Sans','Noto Sans CJK JP',sans-serif" font-size="12" fill="#747474" textLength="13.7" lengthAdjust="spacingAndGlyphs">(S)</text>
<text x="728.3" y="45.0" font-family="'Liberation Sans','Noto Sans CJK JP',sans-serif" font-size="12" fill="#747474" textLength="24.0" lengthAdjust="spacingAndGlyphs">拘束</text>
<text x="755.3" y="45.0" font-family="'Liberation Sans','Noto Sans CJK JP',sans-serif" font-size="12" fill="#747474" textLength="14.2" lengthAdjust="spacingAndGlyphs">(C)</text>
<text x="783.8" y="45.0" font-family="'Liberation Sans','Noto Sans CJK JP',sans-serif" font-size="12" fill="#747474" textLength="24.2" lengthAdjust="spacingAndGlyphs">解析</text>
<text x="811.0" y="45.0" font-family="'Liberation Sans','Noto Sans CJK JP',sans-serif" font-size="12" fill="#747474" textLength="15.8" lengthAdjust="spacingAndGlyphs">(A)</text>
<text x="840.8" y="45.0" font-family="'Liberation Sans','Noto Sans CJK JP',sans-serif" font-size="12" fill="#747474" textLength="28.6" lengthAdjust="spacingAndGlyphs">ヘルプ</text>
<text x="872.7" y="45.0" font-family="'Liberation Sans','Noto Sans CJK JP',sans-serif" font-size="12" fill="#747474" textLength="16.9" lengthAdjust="spacingAndGlyphs">(H)</text>
</svg>

</body>
</html>
